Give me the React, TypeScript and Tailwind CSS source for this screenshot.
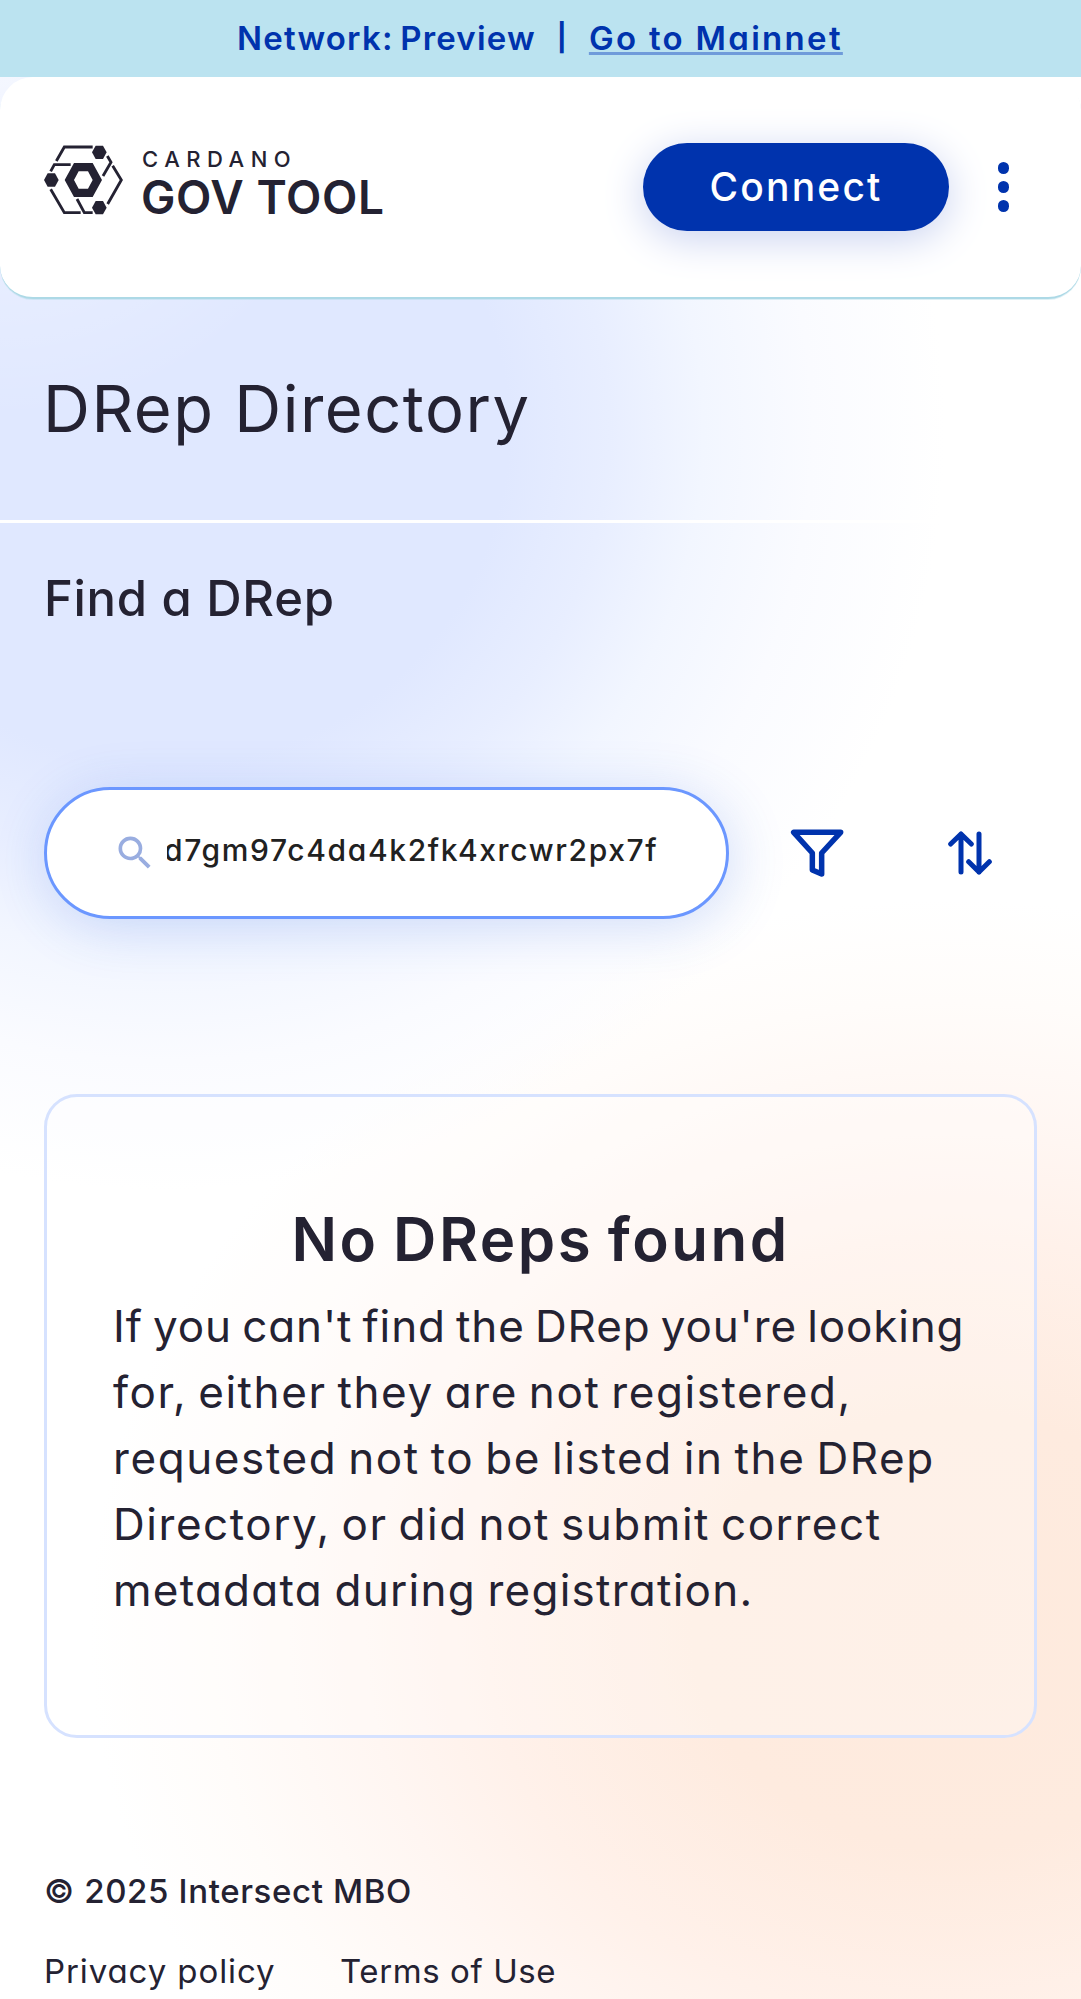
import { MdSearch } from "react-icons/md";

const hexagon = (cx: number, cy: number, w: number, h: number) =>
  `M${cx - w} ${cy}L${cx - w / 2} ${cy - h}H${cx + w / 2}L${cx + w} ${cy}L${cx + w / 2} ${cy + h}H${cx - w / 2}Z`;

function LogoMark() {
  return (
    <svg className="h-[70px] w-[80px] shrink-0" viewBox="42 45 240 210" fill="none">
      <g stroke="#242232" strokeWidth="8.5">
        <path d="M188 51H103L79 93" />
        <path d="M122 104H73L62 124" />
        <path d="M62 178L103 248H152" />
        <path d="M141 207L163 248H188" />
        <path d="M248 107L274 150L233 222" />
        <path d="M232 78L243 97L219 138" />
      </g>
      <g fill="#242232" fillRule="evenodd">
        <path d={hexagon(208, 67, 22, 20)} />
        <path d={hexagon(64, 150, 22, 20)} />
        <path d={hexagon(208, 233, 22, 20)} />
        <path d={hexagon(160, 150, 56, 51) + hexagon(160, 150, 28, 26)} />
      </g>
    </svg>
  );
}

function FilterIcon() {
  return (
    <svg className="h-[48px] w-[54px]" viewBox="149 115 162 144" fill="none" stroke="#0033AD" strokeWidth="16.5" strokeLinecap="round" strokeLinejoin="round">
      <path d="M160 125H301L244 187V250L216 238V187Z" />
    </svg>
  );
}

function SortIcon() {
  return (
    <svg className="h-[44px] w-[44px]" viewBox="626 121 132 132" fill="none" stroke="#0033AD" strokeWidth="15" strokeLinecap="round" strokeLinejoin="round">
      <path d="M665 244V130M634 160L665 130L696 160" />
      <path d="M719 130V244M688 213L719 244L750 213" />
    </svg>
  );
}

const lines = [
  { text: "If you can't find the DRep you're looking", spacing: "tracking-[0.87px] [word-spacing:-3px]" },
  { text: "for, either they are not registered,", spacing: "tracking-[1.58px] [word-spacing:-3px]" },
  { text: "requested not to be listed in the DRep", spacing: "tracking-[1.6px] [word-spacing:-3px]" },
  { text: "Directory, or did not submit correct", spacing: "tracking-[1.55px] [word-spacing:-3px]" },
  { text: "metadata during registration.", spacing: "tracking-[1.25px] [word-spacing:-2px]" },
];

export default function App() {
  return (
    <div className="h-[1999px] w-full overflow-hidden whitespace-nowrap bg-white bg-[radial-gradient(circle_360px_at_0px_60px,#ffffffa0_0%,#ffffff40_55%,#ffffff00_100%),radial-gradient(ellipse_780px_760px_at_165px_430px,#e0e8ff_0%,#e0e8ff_44%,#e8eeff_57%,#f2f6ff_69%,#fafbff_83%,#ffffff00_100%),radial-gradient(ellipse_860px_730px_at_950px_1630px,#feeadd_0%,#feebdf_30%,#fff1ea_54%,#fff6f2_68%,#fffcfa_86%,#ffffff_100%)] font-['Inter',sans-serif] text-[#242232] [font-feature-settings:'cv11']">
      <div className="flex h-[77px] items-center bg-[#bbe3f0] pl-[237px] text-[33px] font-semibold text-[#0033AD]">
        <span className="tracking-[1.2px] [word-spacing:-3px]">Network: Preview</span>
        <span className="ml-[21px] text-[27px] font-bold">|</span>
        <a className="ml-[22px] tracking-[2.3px] underline decoration-[#6f9bda] decoration-[3px] underline-offset-[2px] [text-decoration-skip-ink:none]">Go to Mainnet</a>
      </div>

      <header className="flex h-[222px] items-start rounded-[33px] border-b-2 border-[#add9e6] bg-white pl-[44px] pr-[72px] pt-[66px] shadow-[0_1px_0_#add9e666]">
        <div className="mt-[2px] flex">
          <LogoMark />
          <div className="ml-[17px] mt-[3px] flex flex-col">
            <span className="ml-px text-[22px] font-medium leading-[22px] tracking-[6.5px]">CARDANO</span>
            <span className="mt-[5px] text-[46px] font-semibold leading-[45px] tracking-[0.6px]">GOV TOOL</span>
          </div>
        </div>
        <button className="ml-auto flex h-[88px] w-[306px] items-center justify-center rounded-full bg-[#0033AD] pl-px text-[39px] font-medium tracking-[2.2px] text-white shadow-[0_8px_41px_#c9d2f0]">
          Connect
        </button>
        <div className="ml-[49px] mt-[19px] flex flex-col gap-[7.5px]">
          <i className="size-[11.5px] rounded-full bg-[#0033AD]" />
          <i className="size-[11.5px] rounded-full bg-[#0033AD]" />
          <i className="size-[11.5px] rounded-full bg-[#0033AD]" />
        </div>
      </header>

      <h1 className="pb-[78px] pl-[43px] pt-[77px] text-[65px] leading-[66px] tracking-[1.5px]">DRep Directory</h1>
      <div className="h-[2.5px] bg-white" />

      <main className="px-[44px]">
        <h2 className="mt-[43px] text-[49px] font-medium leading-[66px] tracking-[0.7px]">Find a DRep</h2>

        <div className="mt-[155px] flex items-center">
          <div className="flex h-[132px] w-[685px] items-center rounded-full border-[3px] border-[#6b97ff] bg-white pl-[66px] shadow-[4px_8px_55px_#2f62dc33]">
            <MdSearch className="size-[44px] shrink-0 text-[#99ade0]" />
            <div className="mb-[4px] ml-[10px] w-[500px] overflow-hidden text-[30px] font-medium text-[#212121]">
              <span className="-ml-[3px] tracking-[1.65px]">d7gm97c4da4k2fk4xrcwr2px7f</span>
            </div>
          </div>
          <div className="ml-[61px]"><FilterIcon /></div>
          <div className="ml-[104px]"><SortIcon /></div>
        </div>

        <section className="mt-[175px] h-[644px] rounded-[33px] border-[3px] border-[#d6e2ff] bg-white/30 px-[66px] pt-[98px]">
          <h3 className="text-center text-[60px] font-semibold leading-[88px] tracking-[2.5px] [word-spacing:-3px]">No DReps found</h3>
          <p className="mt-[10px] text-[44px] leading-[66px]">
            {lines.map((l) => (
              <span key={l.text} className={`block ${l.spacing}`}>{l.text}</span>
            ))}
          </p>
        </section>

        <footer className="mt-[131px] text-[33px] leading-[44px]">
          <p className="font-medium tracking-[0.63px]">© 2025 Intersect MBO</p>
          <div className="mt-[36px] flex">
            <a className="w-[296px] tracking-[0.9px]">Privacy policy</a>
            <a className="tracking-[0.6px]">Terms of Use</a>
          </div>
        </footer>
      </main>
    </div>
  );
}
